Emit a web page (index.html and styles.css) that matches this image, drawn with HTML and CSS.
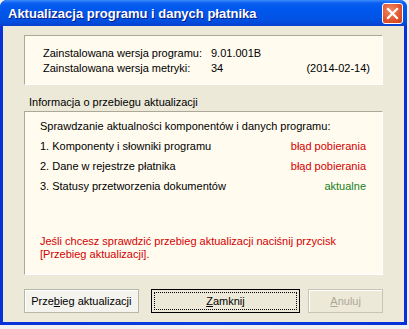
FILE: index.html
```html
<!DOCTYPE html>
<html>
<head>
    <meta charset="utf-8" />
    <title>Aktualizacja programu i danych płatnika</title>
    <link rel="stylesheet" href="styles.css">
</head>
<body>
<div class="window">
    <div class="titlebar">
        <span class="title">Aktualizacja programu i danych płatnika</span>
        <span class="close">
            <svg width="13" height="13" viewBox="0 0 13 13"><path d="M2 2 L11 11 M11 2 L2 11" stroke="#fff" stroke-width="2.2" stroke-linecap="square"/></svg>
        </span>
    </div>
    <div class="client">
        <div class="panel version">
            <span>Zainstalowana wersja programu:</span>
            <span>9.01.001B</span>
            <span></span>
            <span>Zainstalowana wersja metryki:</span>
            <span>34</span>
            <span class="date">(2014-02-14)</span>
        </div>
        <div class="group-label">Informacja o przebiegu aktualizacji</div>
        <div class="panel info">
            <p>Sprawdzanie aktualności komponentów i danych programu:</p>
            <div class="row"><span>1. Komponenty i słowniki programu</span><span class="err">błąd pobierania</span></div>
            <div class="row"><span>2. Dane w rejestrze płatnika</span><span class="err">błąd pobierania</span></div>
            <div class="row"><span>3. Statusy przetworzenia dokumentów</span><span class="ok">aktualne</span></div>
            <p class="hint">Jeśli chcesz sprawdzić przebieg aktualizacji naciśnij przycisk<br/>[Przebieg aktualizacji].</p>
        </div>
        <div class="buttons">
            <button class="btn wide">Prze<u>b</u>ieg aktualizacji</button>
            <button class="btn default"><span class="focus"><u>Z</u>amknij</span></button>
            <button class="btn disabled"><u>A</u>nuluj</button>
        </div>
    </div>
</div>
</body>
</html>
```

FILE: styles.css
```css
*{margin: 0;padding: 0;box-sizing: border-box;}
body{
    background-color: #f0f0f0;
    font-family: "Liberation Sans", Arial, sans-serif;
    font-size: 11px;
    color: #000;
}
.window{
    width: 407px;
    height: 325px;
    display: flex;
    flex-direction: column;
    background: linear-gradient(to right, #0831d9, #0a3fe0 50%, #0831d9);
    border-radius: 7px 7px 0 0;
}
.titlebar{
    height: 26px;
    display: flex;
    align-items: center;
    justify-content: space-between;
    padding: 0 4px 0 8px;
    border-radius: 7px 7px 0 0;
    background: linear-gradient(to bottom, #3d8cfb 0, #0a5ff0 3px, #0058ee 8px, #0154e6 18px, #0348d8 24px, #0a3fc9 26px);
}
.title{
    font-family: "Liberation Sans", Arial, sans-serif;
    font-weight: bold;
    font-size: 13px;
    color: #fff;
    text-shadow: 1px 1px 0 #0a1883;
}
.close{
    width: 21px;
    height: 21px;
    display: flex;
    align-items: center;
    justify-content: center;
    border: 1px solid #fff;
    border-radius: 3px;
    background: radial-gradient(circle at 40% 35%, #f08c6c, #e0542c 60%, #c8401c);
}
.client{
    flex: 1;
    margin: 0 3px 3px 3px;
    background-color: #ece9d8;
    padding: 9px 21px 0 21px;
    display: flex;
    flex-direction: column;
}
.panel{
    background-color: #fffbef;
    border: 1px solid #aca899;
    border-right-color: #fff;
    border-bottom-color: #fff;
}
.version{
    height: 50px;
    display: grid;
    grid-template-columns: 168px 1fr auto;
    align-content: start;
    padding: 10px 12px 0 18px;
    line-height: 15px;
}
.group-label{
    margin-top: 10px;
    padding-left: 5px;
    line-height: 15px;
    height: 16px;
}
.info{
    height: 164px;
    padding: 4px 16px 0 15px;
}
.info p{
    line-height: 20px;
}
.row{
    display: flex;
    justify-content: space-between;
    line-height: 20px;
}
.err{color: #d40000;}
.ok{color: #18801a;}
.info p.hint{
    color: #d40000;
    line-height: 13px;
    margin-top: 39px;
}
.buttons{
    display: flex;
    margin-top: 14px;
}
.btn{
    height: 24px;
    font-family: "Liberation Sans", Arial, sans-serif;
    font-size: 11px;
    color: #000;
    background-color: #f4f3ee;
    border: 1px solid #b8b6a8;
    box-shadow: inset 1px 1px 0 #fff;
}
.wide{width: 115px;}
.default{
    width: 150px;
    margin-left: 12px;
    border: 1px solid #000;
    padding: 2px;
    background-color: #ece9d8;
    box-shadow: none;
}
.focus{
    display: flex;
    height: 100%;
    align-items: center;
    justify-content: center;
    border: 1px dotted #000;
}
.disabled{
    width: 75px;
    margin-left: 8px;
    color: #aca899;
    background-color: #ece9d8;
    border-color: #c8c5b8;
}
```
